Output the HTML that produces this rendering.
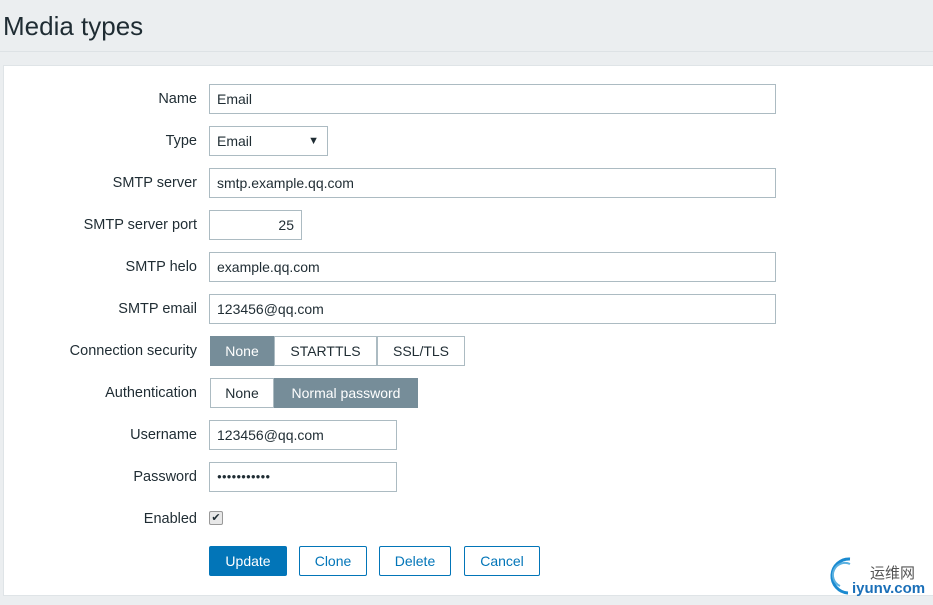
<!DOCTYPE html>
<html><head><style>
body{margin:0;width:933px;height:605px;background:#ebeef0;font-family:"Liberation Sans",Arial,sans-serif;font-size:14px;color:#1f2c33;position:relative;overflow:hidden}
h1{position:absolute;left:3px;top:11px;margin:0;font-size:26px;font-weight:normal;color:#1f2c33}
.hl{position:absolute;left:0;right:0;top:51px;border-top:1px solid #dde2e5}
.panel{position:absolute;left:3px;top:65px;width:940px;height:529px;background:#fff;border:1px solid #dfe4e7}
.lbl{position:absolute;right:736px;text-align:right;color:#1f2c33;white-space:nowrap;font-size:14.5px}
.in{position:absolute;left:209px;height:28px;border:1px solid #acbbc2;box-sizing:content-box;line-height:28px;padding:0 7px;color:#1f2c33;background:#fff}
.seg{position:absolute;height:28px;border:1px solid #acbbc2;line-height:28px;text-align:center;background:#fff;color:#1f2c33}
.seg.on{background:#768d99;border-color:#768d99;color:#fff}
.btn{position:absolute;top:546px;height:28px;border:1px solid #0275b8;line-height:28px;text-align:center;color:#0275b8;background:#fff;border-radius:2px}
</style></head><body>
<h1>Media types</h1>
<div class="hl"></div>
<div class="panel"></div>
<div class="lbl" style="top:91px">Name</div>
<div class="in" style="top:84px;width:551px">Email</div>
<div class="lbl" style="top:133px">Type</div>
<div class="in" style="top:126px;width:103px">Email<span style="position:absolute;right:8px;font-size:11px">▼</span></div>
<div class="lbl" style="top:175px">SMTP server</div>
<div class="in" style="top:168px;width:551px">smtp.example.qq.com</div>
<div class="lbl" style="top:217px">SMTP server port</div>
<div class="in" style="top:210px;width:77px;text-align:right">25</div>
<div class="lbl" style="top:259px">SMTP helo</div>
<div class="in" style="top:252px;width:551px">example.qq.com</div>
<div class="lbl" style="top:301px">SMTP email</div>
<div class="in" style="top:294px;width:551px">123456@qq.com</div>
<div class="lbl" style="top:343px">Connection security</div>
<div class="seg on" style="top:336px;left:210px;width:62px">None</div>
<div class="seg" style="top:336px;left:274px;width:101px">STARTTLS</div>
<div class="seg" style="top:336px;left:377px;width:86px">SSL/TLS</div>
<div class="lbl" style="top:385px">Authentication</div>
<div class="seg" style="top:378px;left:210px;width:62px">None</div>
<div class="seg on" style="top:378px;left:274px;width:142px">Normal password</div>
<div class="lbl" style="top:427px">Username</div>
<div class="in" style="top:420px;width:172px">123456@qq.com</div>
<div class="lbl" style="top:469px">Password</div>
<div class="in" style="top:462px;width:172px;font-size:8px">●●●●●●●●●●●</div>
<div class="lbl" style="top:511px">Enabled</div>
<div style="position:absolute;left:209px;top:511px;width:12px;height:12px;border:1px solid #999;border-radius:2px;background:#e8e8e8;font-size:11px;line-height:12px;text-align:center">✔</div>
<div class="btn" style="left:209px;width:76px;background:#0275b8;color:#fff">Update</div>
<div class="btn" style="left:299px;width:66px">Clone</div>
<div class="btn" style="left:379px;width:70px">Delete</div>
<div class="btn" style="left:464px;width:74px">Cancel</div>
<svg style="position:absolute;left:828px;top:556px" width="40" height="40"><path d="M22 3 A17 17 0 1 0 20 37" fill="none" stroke="#1a8ad0" stroke-width="3"/><path d="M22 8 A12 12 0 0 0 12 30" fill="none" stroke="#5ab0e0" stroke-width="2"/></svg>
<div style="position:absolute;left:870px;top:562px;font-size:15px;color:#555;font-family:'Liberation Sans','Noto Sans CJK SC',sans-serif">运维网</div>
<div style="position:absolute;left:852px;top:580px;font-size:15px;color:#1a6fb8;font-weight:bold">iyunv.com</div>
</body></html>
